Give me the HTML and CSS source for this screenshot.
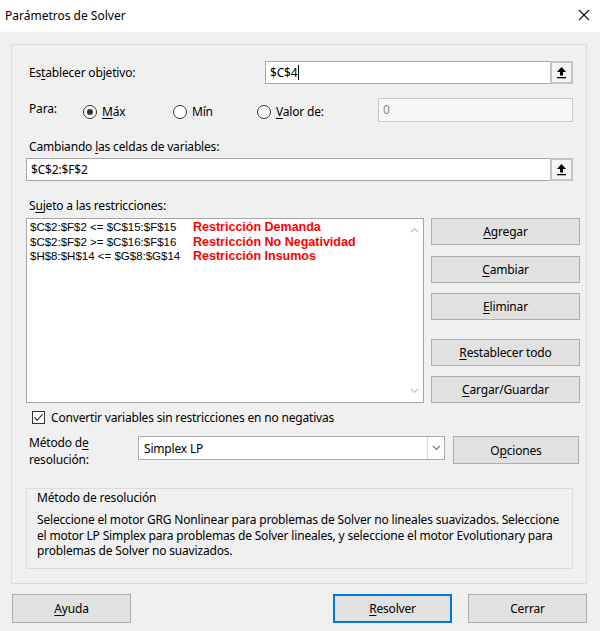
FILE: index.html
```html
<!DOCTYPE html>
<html lang="es">
<head>
  <meta charset="UTF-8" />
  <title>Parámetros de Solver</title>
  <link rel="stylesheet" href="styles.css">
</head>
<body>
  <div class="titlebar">
    <span class="title">Parámetros de Solver</span>
    <svg class="close" width="12" height="12" viewBox="0 0 12 12"><path d="M1 1 L11 11 M11 1 L1 11" stroke="#111" stroke-width="1.1" fill="none"/></svg>
  </div>

  <div class="panel">
    <div class="row row-objective">
      <span class="lbl lbl-objective">Es<u>t</u>ablecer objetivo:</span>
      <div class="refedit refedit-objective">
        <span class="ref-text">$C$4<span class="caret"></span></span>
        <span class="ref-btn">
          <svg width="13" height="13" viewBox="0 0 13 13"><path d="M6.5 1 L11 6 L8 6 L8 9.5 L5 9.5 L5 6 L2 6 Z" fill="#000"/><rect x="2" y="11" width="9" height="1.3" fill="#000"/></svg>
        </span>
      </div>
    </div>

    <div class="row row-para">
      <span class="lbl lbl-para">Para:</span>
      <span class="radio radio-max"><span class="circle checked"></span><span><u>M</u>áx</span></span>
      <span class="radio radio-min"><span class="circle"></span><span>Mín</span></span>
      <span class="radio radio-valor"><span class="circle"></span><span><u>V</u>alor de:</span></span>
      <div class="value-box">0</div>
    </div>

    <div class="lbl lbl-block lbl-changing">Cambiando <u>l</u>as celdas de variables:</div>
    <div class="refedit refedit-changing">
      <span class="ref-text">$C$2:$F$2</span>
      <span class="ref-btn">
        <svg width="13" height="13" viewBox="0 0 13 13"><path d="M6.5 1 L11 6 L8 6 L8 9.5 L5 9.5 L5 6 L2 6 Z" fill="#000"/><rect x="2" y="11" width="9" height="1.3" fill="#000"/></svg>
      </span>
    </div>

    <div class="lbl lbl-block lbl-subject">S<u>u</u>jeto a las restricciones:</div>
    <div class="row row-constraints">
      <div class="listbox">
        <div class="list-items">
          <div class="item"><span class="expr">$C$2:$F$2 &lt;= $C$15:$F$15</span><span class="note">Restricción Demanda</span></div>
          <div class="item"><span class="expr">$C$2:$F$2 &gt;= $C$16:$F$16</span><span class="note">Restricción No Negatividad</span></div>
          <div class="item"><span class="expr">$H$8:$H$14 &lt;= $G$8:$G$14</span><span class="note">Restricción Insumos</span></div>
        </div>
        <div class="scrollbar">
          <svg width="9" height="6" viewBox="0 0 9 6"><path d="M1 5 L4.5 1.5 L8 5" stroke="#c2c2c2" stroke-width="1.2" fill="none"/></svg>
          <svg width="9" height="6" viewBox="0 0 9 6"><path d="M1 1 L4.5 4.5 L8 1" stroke="#c2c2c2" stroke-width="1.2" fill="none"/></svg>
        </div>
      </div>
      <div class="side-buttons">
        <button class="btn btn-add"><u>A</u>gregar</button>
        <button class="btn btn-change"><u>C</u>ambiar</button>
        <button class="btn btn-delete"><u>E</u>liminar</button>
        <button class="btn btn-reset"><u>R</u>establecer todo</button>
        <button class="btn btn-load"><u>C</u>argar/Guardar</button>
      </div>
    </div>

    <div class="row row-check">
      <span class="checkbox">
        <svg width="11" height="11" viewBox="0 0 11 11"><path d="M1.5 5.5 L4.2 8.3 L9.6 2.2" stroke="#222" stroke-width="1.1" fill="none"/></svg>
      </span>
      <span class="check-label">Convertir variables sin restricciones en no negativas</span>
    </div>

    <div class="row row-method">
      <span class="lbl lbl-method">Método d<u>e</u><br>resolución:</span>
      <div class="select">
        <span class="select-text">Simplex LP</span>
        <span class="select-arrow">
          <svg width="9" height="6" viewBox="0 0 9 6"><path d="M1 1 L4.5 4.5 L8 1" stroke="#777" stroke-width="1.1" fill="none"/></svg>
        </span>
      </div>
      <button class="btn btn-options">O<u>p</u>ciones</button>
    </div>

    <div class="groupbox">
      <div class="group-title">Método de resolución</div>
      <div class="group-text">Seleccione el motor GRG Nonlinear para problemas de Solver no lineales suavizados. Seleccione<br>el motor LP Simplex para problemas de Solver lineales, y seleccione el motor Evolutionary para<br>problemas de Solver no suavizados.</div>
    </div>
  </div>

  <div class="footer">
    <button class="btn btn-footer"><u>A</u>yuda</button>
    <div class="footer-right">
      <button class="btn btn-footer btn-default"><u>R</u>esolver</button>
      <button class="btn btn-footer">Cerrar</button>
    </div>
  </div>
</body>
</html>
```

FILE: styles.css
```css
* {
  box-sizing: border-box;
}

body {
  margin: 0;
  width: 600px;
  height: 631px;
  background-color: #f0f0f0;
  font-family: 'Noto Sans', 'Segoe UI', sans-serif;
  font-size: 12px;
  letter-spacing: -0.18px;
  color: #000;
  overflow: hidden;
}

u {
  text-decoration-thickness: 1px;
  text-underline-offset: 2px;
}

.titlebar {
  height: 32px;
  background-color: #fff;
  display: flex;
  align-items: center;
  justify-content: space-between;
  padding: 0 10px 2px 5px;
}

.title {
  font-size: 12px;
  letter-spacing: 0;
}

.panel {
  margin: 12px 0 0 11px;
  width: 576px;
  height: 540px;
  border: 1px solid #dcdcdc;
  padding: 0 0 0 14px;
}

.row {
  display: flex;
  align-items: center;
}

.lbl {
  margin-left: 3px;
}

/* objective */
.row-objective {
  margin-top: 16px;
  height: 23px;
}

.lbl-objective {
  width: 236px;
}

.refedit {
  display: flex;
  height: 23px;
  background-color: #fff;
  border: 1px solid #a5a5a5;
}

.refedit-objective {
  width: 308px;
}

.refedit-changing {
  width: 547px;
  margin-top: 3px;
}

.ref-text {
  flex: 1;
  padding: 2px 0 0 4px;
  line-height: 17px;
}

.caret {
  display: inline-block;
  width: 1px;
  height: 15px;
  background-color: #000;
  vertical-align: -3px;
  margin-left: 1px;
}

.ref-btn {
  width: 23px;
  height: 23px;
  margin: -1px -1px 0 0;
  border: 2px solid #c4c4c4;
  background-color: #f4f4f4;
  display: flex;
  align-items: center;
  justify-content: center;
}

/* para */
.row-para {
  margin-top: 14px;
  height: 23px;
}

.lbl-para {
  width: 54px;
  margin-top: -3px;
}

.radio {
  display: flex;
  align-items: center;
  gap: 5px;
  margin-top: 4px;
}

.radio-max {
  width: 90px;
}

.radio-min {
  width: 84px;
}

.radio-valor {
  width: 121px;
}

.circle {
  width: 14px;
  height: 14px;
  border: 1px solid #333;
  border-radius: 50%;
  background-color: #fff;
  display: flex;
  align-items: center;
  justify-content: center;
}

.circle.checked::after {
  content: "";
  width: 6px;
  height: 6px;
  border-radius: 50%;
  background-color: #333;
}

.value-box {
  width: 195px;
  height: 24px;
  border: 1px solid #c8c8c8;
  background-color: #f7f7f7;
  color: #8a8a8a;
  padding: 2px 0 0 4px;
}

.lbl-block {
  height: 16px;
  line-height: 16px;
}

.lbl-changing {
  margin-top: 18px;
}

.lbl-subject {
  margin-top: 17px;
}

/* constraints */
.row-constraints {
  margin-top: 4px;
  align-items: flex-start;
}

.listbox {
  width: 398px;
  height: 185px;
  border: 1px solid #a5a5a5;
  background-color: #fff;
  display: flex;
}

.list-items {
  flex: 1;
  padding: 1px 0 0 3px;
  font-family: 'Liberation Sans', Arial, sans-serif;
  letter-spacing: 0;
}

.item {
  display: flex;
  height: 14.5px;
  line-height: 14.5px;
  white-space: nowrap;
}

.expr {
  width: 163px;
  font-size: 11.5px;
}

.note {
  color: #ff0000;
  font-weight: 700;
  font-size: 12.5px;
}

.scrollbar {
  width: 18px;
  display: flex;
  flex-direction: column;
  justify-content: space-between;
  align-items: center;
  padding: 8px 0 8px;
}

.side-buttons {
  margin-left: 7px;
  display: flex;
  flex-direction: column;
  width: 149px;
}

.btn {
  height: 27px;
  background-color: #e1e1e1;
  border: 1px solid #adadad;
  font-family: inherit;
  font-size: 12px;
  letter-spacing: -0.18px;
  color: #000;
  padding: 0;
}

.btn-change {
  margin-top: 11px;
}

.btn-delete {
  margin-top: 10px;
}

.btn-reset {
  margin-top: 19px;
}

.btn-load {
  margin-top: 10px;
}

/* checkbox */
.row-check {
  margin-top: 6px;
  height: 16px;
  padding-left: 6px;
}

.checkbox {
  width: 13px;
  height: 13px;
  border: 1px solid #333;
  background-color: #fff;
  display: flex;
  align-items: center;
  justify-content: center;
}

.check-label {
  margin-left: 6px;
}

/* method */
.row-method {
  margin-top: 11px;
  align-items: flex-start;
}

.lbl-method {
  width: 109px;
  line-height: 16.5px;
  margin-top: -1px;
}

.select {
  width: 307px;
  height: 24px;
  border: 1px solid #acacac;
  background-color: #fff;
  display: flex;
}

.select-text {
  flex: 1;
  padding: 3px 0 0 5px;
}

.select-arrow {
  width: 17px;
  border-left: 1px solid #d9d9d9;
  display: flex;
  align-items: center;
  justify-content: center;
}

.btn-options {
  margin-left: 8px;
  width: 126px;
  height: 28px;
}

/* group box */
.groupbox {
  margin-top: 20px;
  width: 547px;
  height: 81px;
  border: 1px solid #dcdcdc;
  padding: 1px 0 0 10px;
}

.group-title {
  line-height: 16px;
}

.group-text {
  margin-top: 6px;
  line-height: 15.5px;
  white-space: nowrap;
}

/* footer */
.footer {
  display: flex;
  justify-content: space-between;
  margin: 10px 0 0 12px;
  width: 575px;
}

.footer-right {
  display: flex;
  gap: 16px;
}

.btn-footer {
  width: 119px;
  height: 29px;
}

.btn-default {
  border: 2px solid #0078d7;
}
```
